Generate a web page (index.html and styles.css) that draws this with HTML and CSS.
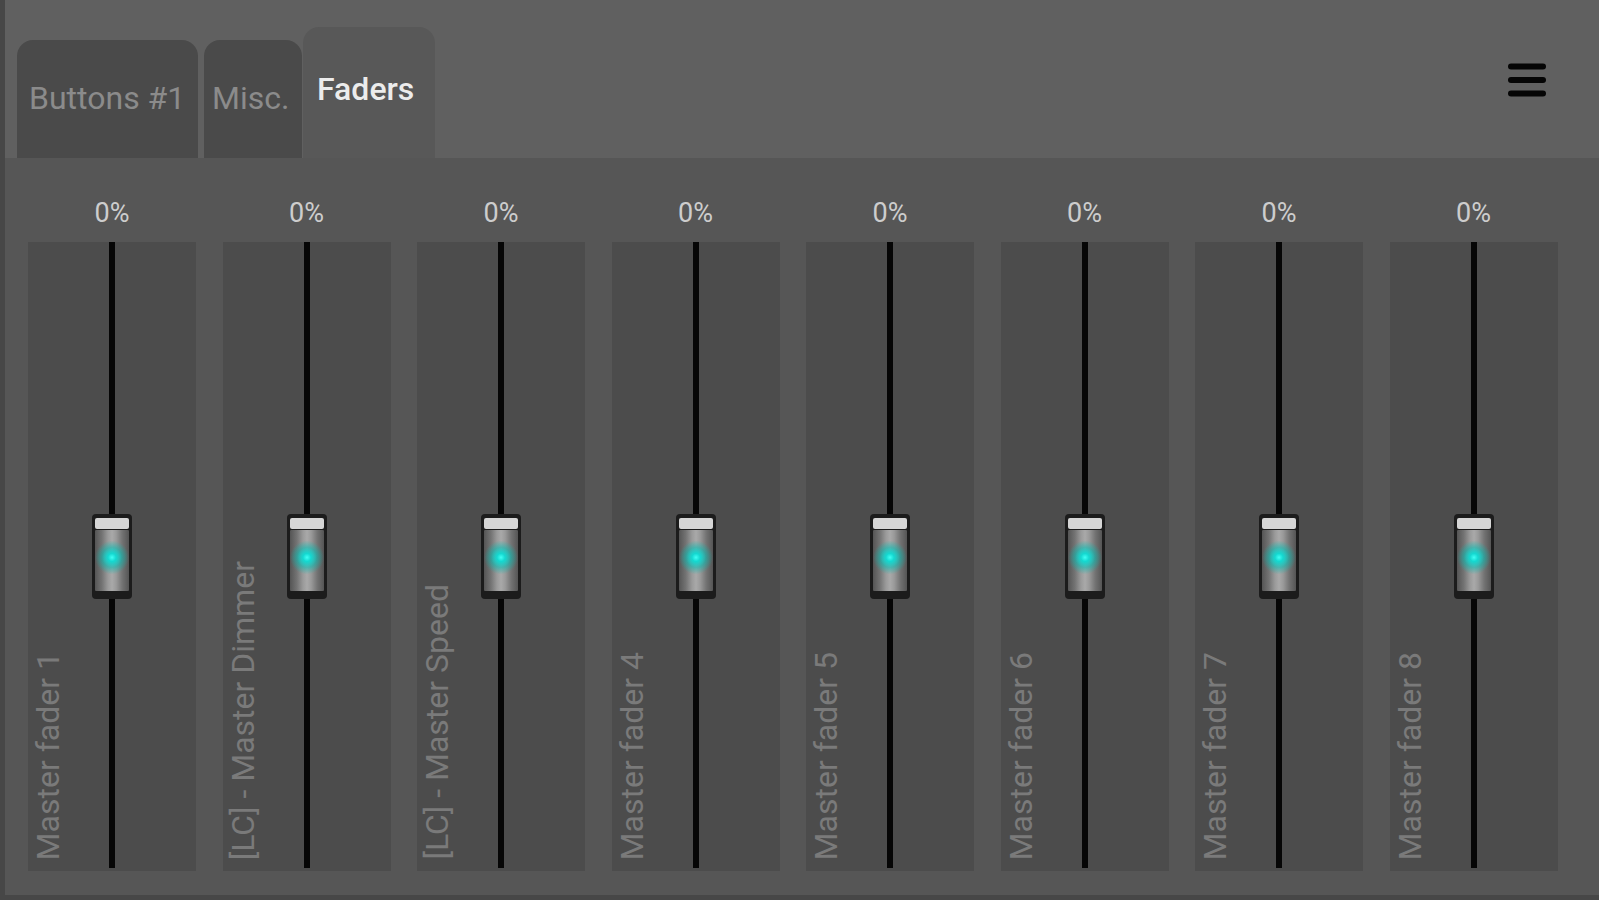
FILE: index.html
```html
<!DOCTYPE html>
<html lang="en">
<head>
<meta charset="utf-8">
<title>Faders</title>
<link rel="stylesheet" href="styles.css">
</head>
<body>
<div class="app">
  <header class="topbar">
    <nav class="tabs">
      <div class="tab tab-buttons">Buttons #1</div>
      <div class="tab tab-misc">Misc.</div>
      <div class="tab tab-active">Faders</div>
    </nav>
    <button class="menu" aria-label="Menu">
      <svg width="38" height="34" viewBox="0 0 38 34">
        <rect x="0" y="0.5" width="38" height="6" rx="3" fill="#050505"/>
        <rect x="0" y="14" width="38" height="6" rx="3" fill="#050505"/>
        <rect x="0" y="27.5" width="38" height="6" rx="3" fill="#050505"/>
      </svg>
    </button>
  </header>
  <main class="faders">
    <div class="strip"><div class="value">0%</div><div class="slot"><div class="track"></div><div class="knob"><div class="cap"></div><div class="body"></div></div><div class="name">Master fader 1</div></div></div>
    <div class="strip"><div class="value">0%</div><div class="slot"><div class="track"></div><div class="knob"><div class="cap"></div><div class="body"></div></div><div class="name">[LC] - Master Dimmer</div></div></div>
    <div class="strip"><div class="value">0%</div><div class="slot"><div class="track"></div><div class="knob"><div class="cap"></div><div class="body"></div></div><div class="name">[LC] - Master Speed</div></div></div>
    <div class="strip"><div class="value">0%</div><div class="slot"><div class="track"></div><div class="knob"><div class="cap"></div><div class="body"></div></div><div class="name">Master fader 4</div></div></div>
    <div class="strip"><div class="value">0%</div><div class="slot"><div class="track"></div><div class="knob"><div class="cap"></div><div class="body"></div></div><div class="name">Master fader 5</div></div></div>
    <div class="strip"><div class="value">0%</div><div class="slot"><div class="track"></div><div class="knob"><div class="cap"></div><div class="body"></div></div><div class="name">Master fader 6</div></div></div>
    <div class="strip"><div class="value">0%</div><div class="slot"><div class="track"></div><div class="knob"><div class="cap"></div><div class="body"></div></div><div class="name">Master fader 7</div></div></div>
    <div class="strip"><div class="value">0%</div><div class="slot"><div class="track"></div><div class="knob"><div class="cap"></div><div class="body"></div></div><div class="name">Master fader 8</div></div></div>
  </main>
</div>
</body>
</html>
```
FILE: styles.css
```css
html, body {
  margin: 0;
  padding: 0;
}
body {
  background: #474747;
  font-family: Roboto, "Liberation Sans", sans-serif;
  width: 1599px;
  height: 900px;
  overflow: hidden;
}
.app {
  margin-left: 5px;
  height: 895px;
  display: flex;
  flex-direction: column;
}
.topbar {
  height: 158px;
  flex: 0 0 158px;
  background: #606060;
  display: flex;
  justify-content: space-between;
  align-items: flex-end;
  padding-left: 12px;
}
.tabs {
  display: flex;
  align-items: flex-end;
}
.tab {
  box-sizing: border-box;
  height: 118px;
  background: #4a4a4a;
  border-radius: 16px 16px 0 0;
  color: #8b8b8b;
  font-size: 32px;
  line-height: 32px;
  padding-top: 42px;
  padding-left: 12px;
  white-space: nowrap;
}
.tab-buttons {
  width: 181px;
  margin-right: 6px;
}
.tab-misc {
  width: 98px;
  padding-left: 8px;
  margin-right: 1px;
}
.tab-active {
  width: 132px;
  height: 131px;
  background: #585858;
  color: #ececec;
  font-weight: 500;
  padding-top: 46px;
  padding-left: 14px;
}
.menu {
  align-self: flex-start;
  margin: 63px 53px 0 0;
  padding: 0;
  border: 0;
  background: none;
  width: 38px;
  height: 34px;
  display: block;
}
.menu svg {
  display: block;
}
.faders {
  flex: 1;
  background: #565656;
  display: flex;
  gap: 26.5px;
  padding: 42px 0 0 23px;
}
.strip {
  width: 168px;
  display: flex;
  flex-direction: column;
}
.value {
  height: 26px;
  font-size: 27px;
  line-height: 26px;
  text-align: center;
  color: #cdcdcd;
  margin-bottom: 16px;
}
.slot {
  height: 629px;
  background: #4c4c4c;
  display: grid;
  grid-template-columns: 1fr;
  grid-template-rows: 1fr;
}
.slot > * {
  grid-area: 1 / 1;
}
.track {
  width: 6px;
  justify-self: center;
  background: #060606;
  margin-bottom: 3px;
}
.knob {
  justify-self: center;
  align-self: center;
  box-sizing: border-box;
  width: 40px;
  height: 85px;
  background: #1c1c1c;
  border-radius: 4px;
  padding: 4px 3px 8px;
  display: flex;
  flex-direction: column;
  gap: 1px;
}
.cap {
  height: 11px;
  background: #d6d6d6;
  border-radius: 2px;
}
.body {
  flex: 1;
  border-radius: 1px;
  background:
    radial-gradient(circle at 50% 45%, #3ffff4 0, #14d8d0 4px, rgba(0, 190, 180, 0.55) 10px, rgba(0, 160, 150, 0) 17px),
    linear-gradient(90deg, #555 0, #737373 20%, #9a9a9a 38%, #a9a9a9 50%, #9a9a9a 62%, #737373 80%, #555 100%);
}
.name {
  writing-mode: vertical-rl;
  transform: rotate(180deg);
  align-self: end;
  justify-self: start;
  margin-left: 5px;
  margin-bottom: 11px;
  font-size: 32px;
  line-height: 30px;
  color: #7a7a7a;
  white-space: nowrap;
}
```
